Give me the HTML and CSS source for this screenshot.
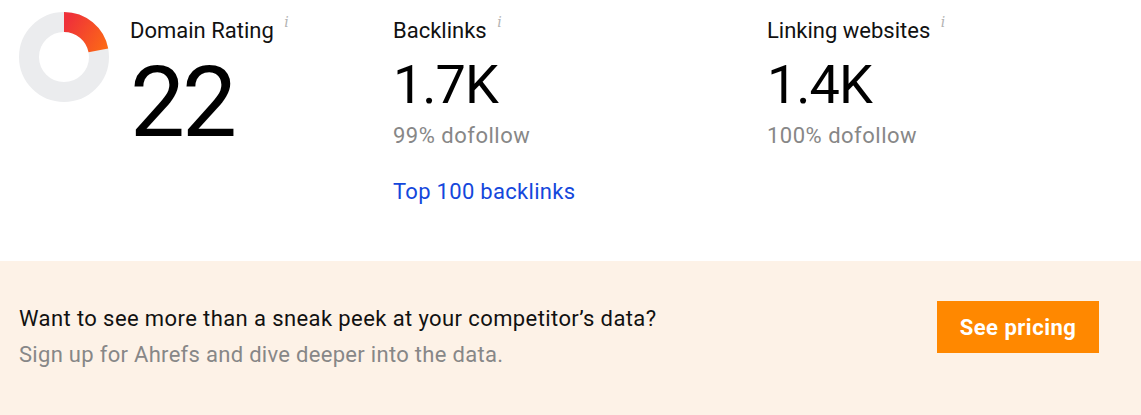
FILE: index.html
```html
<!doctype html>
<html lang="en">

<head>
    <meta charset="UTF-8">
    <title>Website authority checker</title>
    <link rel="stylesheet" href="styles.css">
</head>

<body>
    <div class="stats">
        <div class="stat stat-dr">
            <svg class="donut" width="90" height="90" viewBox="0 0 90 90">
                <defs>
                    <linearGradient id="dr-grad" gradientUnits="userSpaceOnUse" x1="45" y1="15" x2="88" y2="40">
                        <stop offset="0" stop-color="#ef3139"></stop>
                        <stop offset="1" stop-color="#fd6d14"></stop>
                    </linearGradient>
                </defs>
                <circle cx="45" cy="45" r="35" fill="none" stroke="#ebecee" stroke-width="20"></circle>
                <!-- 22% of the ring, starting at 12 o'clock -->
                <path d="M45 10 A35 35 0 0 1 79.38 38.44" fill="none" stroke="url(#dr-grad)" stroke-width="20"></path>
            </svg>
            <div class="stat-body">
                <div class="stat-label">Domain Rating <span class="info">i</span></div>
                <div class="stat-value big">22</div>
            </div>
        </div>
        <div class="stat">
            <div class="stat-body">
                <div class="stat-label">Backlinks <span class="info">i</span></div>
                <div class="stat-value">1.7K</div>
                <div class="stat-sub">99% dofollow</div>
                <a class="stat-link" href="#">Top 100 backlinks</a>
            </div>
        </div>
        <div class="stat">
            <div class="stat-body">
                <div class="stat-label">Linking websites <span class="info">i</span></div>
                <div class="stat-value">1.4K</div>
                <div class="stat-sub">100% dofollow</div>
            </div>
        </div>
    </div>

    <div class="promo">
        <div class="promo-text">
            <p class="promo-title">Want to see more than a sneak peek at your competitor’s data?</p>
            <p class="promo-sub">Sign up for Ahrefs and dive deeper into the data.</p>
        </div>
        <a class="btn-pricing" href="#">See pricing</a>
    </div>
</body>

</html>
```

FILE: styles.css
```css
* {
    margin: 0;
    padding: 0;
}
body {
    font-family: Roboto, "Liberation Sans", sans-serif;
    color: #111;
    background-color: #fff;
}
a {
    text-decoration: none;
}

/*top stats*/
.stats {
    display: grid;
    grid-template-columns: 374px 374px 1fr;
    height: 261px;
    padding-left: 19px;
    box-sizing: border-box;
}

.stat-dr {
    display: flex;
    align-items: flex-start;
}

.donut {
    display: block;
    margin-top: 12px;
    flex: none;
}

.stat-dr .stat-body {
    margin-left: 21px;
}

.stat-label {
    margin-top: 17px;
    font-size: 22px;
    line-height: 28px;
    color: #111;
}

/*small grey "i" next to labels*/
.info {
    display: inline-block;
    vertical-align: top;
    margin-left: 5px;
    margin-top: -3px;
    font-family: "DejaVu Serif", serif;
    font-style: italic;
    font-size: 14px;
    line-height: 16px;
    color: #b3b3b3;
}

.stat-value {
    margin-top: 13px;
    font-size: 54px;
    line-height: 54px;
    letter-spacing: -1px;
    color: #000;
}

.stat-value.big {
    margin-top: 9px;
    font-size: 98px;
    line-height: 98px;
    letter-spacing: -3px;
}

.stat-sub {
    margin-top: 10px;
    font-size: 22px;
    line-height: 28px;
    letter-spacing: 0.5px;
    color: #878787;
}

.stat-link {
    display: inline-block;
    margin-top: 28px;
    font-size: 22px;
    line-height: 28px;
    letter-spacing: 0.3px;
    color: #1447dc;
}

/*bottom call to action*/
.promo {
    display: flex;
    justify-content: space-between;
    align-items: flex-start;
    height: 154px;
    padding: 40px 42px 0 19px;
    box-sizing: border-box;
    background-color: #fdf2e7;
}

.promo-text {
    font-size: 22px;
    line-height: 36px;
}

.promo-title {
    color: #111;
    letter-spacing: 0.4px;
}

.promo-sub {
    color: #878787;
    letter-spacing: 0.3px;
}

.btn-pricing {
    display: flex;
    align-items: center;
    justify-content: center;
    width: 162px;
    height: 52px;
    background-color: #ff8800;
    color: #fff;
    font-size: 22px;
    font-weight: bold;
    letter-spacing: 0.5px;
}
```
